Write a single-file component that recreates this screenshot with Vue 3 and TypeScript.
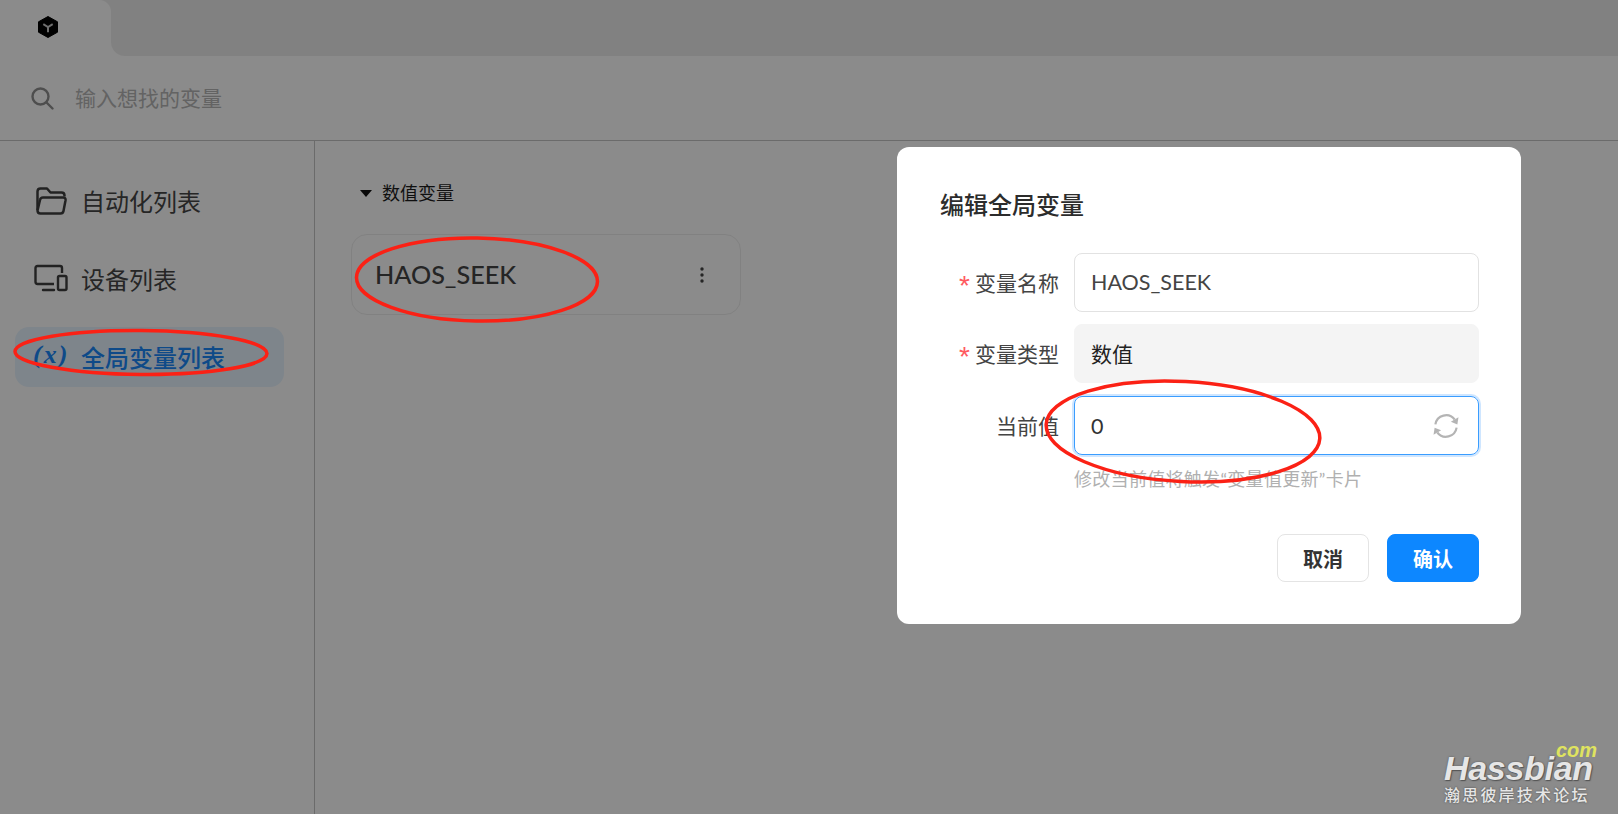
<script setup lang="ts">
interface Field {
  label: string
  required: boolean
  value: string
  kind: 'text' | 'readonly' | 'focus'
}

const fields: Field[] = [
  { label: '变量名称', required: true, value: 'HAOS_SEEK', kind: 'text' },
  { label: '变量类型', required: true, value: '数值', kind: 'readonly' },
  { label: '当前值', required: false, value: '0', kind: 'focus' }
]
</script>

<template>
  <div class="page">
    <header class="tabs">
      <div class="tab">
        <svg class="logo" width="22" height="24" viewBox="0 0 22 24">
          <path d="M11 1.500 20.500 6.800V17.200L11 22.500 1.500 17.200V6.800Z" fill="#000" stroke="#000" stroke-linejoin="round" />
          <path d="M6.300 9.200 11 12l4.700-2.800M11 12v5.200" fill="none" stroke="#c8c8c8" stroke-width="2" />
        </svg>
      </div>
      <div class="tab-fill"></div>
    </header>

    <div class="search">
      <svg width="24" height="24" viewBox="0 0 24 24" fill="none" stroke="#8f8f8f" stroke-width="2.400">
        <circle cx="10.500" cy="10.500" r="8" />
        <path d="m16.500 16.500 6 6" stroke-linecap="round" />
      </svg>
      <span class="placeholder">输入想找的变量</span>
    </div>

    <div class="body">
      <aside class="side">
        <div class="nav-item">
          <svg class="nav-icon" width="32" height="30" viewBox="0 0 32 30" fill="none" stroke="#3e3e3e" stroke-width="2.500" stroke-linejoin="round">
            <path d="M2.500 24V5.500q0-3 3-3h6.500l3.500 4h11q3 0 3 3v1" />
            <path d="M2.500 24.500q0 3 3 3h20q2.500 0 3-2.500l2-10.500q.5-3-2.500-3H8q-2.500 0-3 2.500L2.500 24.500Z" />
          </svg>
          <span>自动化列表</span>
        </div>
        <div class="nav-item">
          <svg class="nav-icon device" width="34" height="28" viewBox="0 0 34 28" fill="none" stroke="#3e3e3e" stroke-width="2.400" stroke-linejoin="round">
            <path d="M20 20H3.500q-2 0-2-2V4q0-2 2-2H26q2 0 2 2v5" />
            <path d="M9 26h11" stroke-linecap="round" />
            <rect x="24" y="12" width="8.500" height="14" rx="1.500" />
          </svg>
          <span>设备列表</span>
        </div>
        <div class="nav-item active">
          <span class="nav-x">(x)</span>
          <span>全局变量列表</span>
        </div>
      </aside>

      <main class="content">
        <div class="group">
          <i class="caret"></i>
          <span>数值变量</span>
        </div>
        <div class="card">
          <span class="card-name">HAOS_SEEK</span>
          <svg width="4" height="16" viewBox="0 0 4 16" fill="#444">
            <circle cx="2" cy="2" r="1.700" />
            <circle cx="2" cy="8" r="1.700" />
            <circle cx="2" cy="14" r="1.700" />
          </svg>
        </div>
      </main>
    </div>

    <div class="mask"></div>

    <section class="dialog">
      <h2 class="title">编辑全局变量</h2>
      <div class="rows">
        <div v-for="f in fields" :key="f.label" class="row" :class="`row-${f.kind}`">
          <label class="label"><em v-if="f.required">*</em>{{ f.label }}</label>
          <div class="control" :class="f.kind">
            <span>{{ f.value }}</span>
            <svg v-if="f.kind === 'focus'" width="26" height="26" viewBox="0 0 24 24" fill="none" stroke="#b4b4b4" stroke-width="2">
              <path d="M2.200 10.500A10 10 0 0 1 20 6" />
              <path d="M21.800 13.500A10 10 0 0 1 4 18" />
              <path d="m23.500 4-1 6.500-6-2.500Z" fill="#b4b4b4" stroke="none" />
              <path d="m.5 20 1-6.500 6 2.500Z" fill="#b4b4b4" stroke="none" />
            </svg>
          </div>
        </div>
      </div>
      <p class="hint">修改当前值将触发“变量值更新”卡片</p>
      <div class="actions">
        <button class="btn">取消</button>
        <button class="btn primary">确认</button>
      </div>
    </section>

    <svg class="marks" width="1618" height="814" viewBox="0 0 1618 814" fill="none" stroke="#fb2115" stroke-width="3.500">
      <ellipse cx="141" cy="352.500" rx="126" ry="22" transform="rotate(0.500 141 352)" />
      <ellipse cx="477" cy="279.500" rx="120.500" ry="41.500" transform="rotate(1 477 279)" />
      <ellipse cx="1183" cy="431.500" rx="137" ry="50" transform="rotate(3 1183 431)" />
    </svg>

    <div class="watermark">
      <span class="wm-com">com</span>
      <span class="wm-name">Hassbian</span>
      <span class="wm-sub">瀚思彼岸技术论坛</span>
    </div>
  </div>
</template>

<style>
html, body { margin: 0; background: #fff; }
</style>

<style scoped>
.page {
  position: relative;
  width: 1618px;
  height: 814px;
  overflow: hidden;
  display: flex;
  flex-direction: column;
  background: #fdfdfd;
  font-family: Lato, "Noto Sans CJK SC", sans-serif;
  color: #4a4a4a;
}
.tabs { display: flex; height: 56px; flex: none; }
.tab {
  position: relative;
  width: 111px;
  display: flex;
  justify-content: center;
  align-items: flex-start;
  padding-top: 15px;
  box-sizing: border-box;
  background: #fdfdfd;
}
.tab::after {
  content: "";
  position: absolute;
  top: 0;
  right: 0;
  width: 12px;
  height: 12px;
  background: radial-gradient(circle at 0 100%, transparent 11.500px, #ececec 12.500px);
}
.tab-fill { flex: 1; background: #ececec; border-bottom-left-radius: 14px; }
.logo { margin-right: 16px; }
.search {
  height: 85px;
  flex: none;
  box-sizing: border-box;
  display: flex;
  align-items: center;
  padding: 0 0 0 30px;
  gap: 21px;
  border-bottom: 1px solid #c4c4c4;
}
.placeholder { font-size: 21px; color: #b5b5b5; margin-bottom: 2px; }
.body { flex: 1; display: flex; min-height: 0; }
.side {
  width: 315px;
  flex: none;
  box-sizing: border-box;
  border-right: 1px solid #c4c4c4;
  padding: 30px 30px 0 15px;
  display: flex;
  flex-direction: column;
  gap: 18px;
}
.nav-item {
  height: 60px;
  display: flex;
  align-items: center;
  font-size: 24px;
  border-radius: 14px;
  color: #454545;
  position: relative;
  padding: 0 0 2px 66px;
  box-sizing: border-box;
}
.nav-icon { position: absolute; left: 20px; top: 15px; }
.device { left: 19px; }
.active { color: #1a88f8; background: #e6f2fe; font-weight: 500; }
.nav-x {
  position: absolute;
  left: 18px;
  top: 13px;
  font: italic bold 26px "Liberation Serif", serif;
  letter-spacing: 2px;
}
.content { flex: 1; padding: 37px 0 0 36px; }
.group {
  display: flex;
  align-items: center;
  gap: 10px;
  margin-left: 9px;
  font-size: 18px;
  line-height: 30px;
  color: #1c1c1c;
}
.caret {
  width: 0;
  height: 0;
  border: 6px solid transparent;
  border-top: 7px solid #111;
  border-bottom: 0;
}
.card {
  box-sizing: border-box;
  width: 390px;
  height: 81px;
  margin-top: 26px;
  border: 1px solid #ececec;
  border-radius: 16px;
  display: flex;
  align-items: center;
  justify-content: space-between;
  padding: 0 36px 0 23px;
  font-size: 25.200px;
  font-weight: 500;
  color: #444;
}
.card-name { margin-bottom: 2px; }
.mask {
  position: absolute;
  inset: 0;
  background: rgba(0, 0, 0, 0.45);
}
.dialog {
  position: absolute;
  left: 897px;
  top: 147px;
  width: 624px;
  height: 477px;
  box-sizing: border-box;
  padding: 40px 42px 0 43px;
  background: #fff;
  border-radius: 12px;
  color: #333;
}
.title {
  margin: 0;
  font-size: 24px;
  line-height: 36px;
  font-weight: 500;
  color: #2c2c2c;
}
.rows { display: flex; flex-direction: column; gap: 12px; margin-top: 30px; }
.row { display: flex; align-items: center; gap: 15px; }
.row-focus { margin-top: 1px; }
.label {
  width: 119px;
  flex: none;
  display: flex;
  justify-content: flex-end;
  align-items: center;
  padding-bottom: 2px;
  font-size: 21px;
  color: #444;
}
.label em {
  font: normal 28px/20px "Liberation Sans", sans-serif;
  color: #ff5a5f;
  margin: 8px 5px 0 0;
}
.control {
  flex: 1;
  box-sizing: border-box;
  height: 59px;
  border: 1px solid #e2e2e2;
  border-radius: 8px;
  display: flex;
  align-items: center;
  justify-content: space-between;
  padding: 0 19px 2px 16px;
  font-size: 21.500px;
  color: #444;
}
.readonly { background: #f4f4f4; border-color: #f4f4f4; color: #222; font-size: 21px; }
.focus { border-color: #3a9dff; box-shadow: 0 0 0 2px #cfe6ff; color: #333; padding-bottom: 0; }
.hint {
  margin: 9px 0 0 134px;
  font-size: 18px;
  letter-spacing: 0.300px;
  line-height: 30px;
  color: #b0b0b0;
}
.actions {
  display: flex;
  justify-content: flex-end;
  gap: 18px;
  margin-top: 40px;
}
.btn {
  width: 92px;
  height: 48px;
  box-sizing: border-box;
  border: 1px solid #e4e4e4;
  border-radius: 8px;
  background: #fff;
  font: 700 20px Lato, "Noto Sans CJK SC", sans-serif;
  color: #333;
}
.primary { background: #0d87ff; border-color: #0d87ff; color: #fff; }
.marks { position: absolute; inset: 0; pointer-events: none; }
.watermark {
  position: absolute;
  right: 0;
  bottom: 0;
  width: 175px;
  height: 70px;
  color: #e6e6e6;
  font-family: "Liberation Sans", "Noto Sans CJK SC", sans-serif;
}
.wm-com {
  position: absolute;
  right: 21px;
  top: 0;
  font: italic bold 20px/13px "Liberation Sans", sans-serif;
  color: #dfe35f;
}
.wm-name {
  position: absolute;
  left: 1px;
  top: 13px;
  font: italic bold 34px/23px "Liberation Sans", sans-serif;
  letter-spacing: -0.300px;
  text-shadow: 0 0 2px #555, 1px 1px 1px #555;
}
.wm-sub {
  position: absolute;
  left: 1px;
  top: 44px;
  font-size: 16px;
  line-height: 16px;
  letter-spacing: 2.200px;
  font-weight: 500;
  text-shadow: 0 0 2px #444;
}
</style>
